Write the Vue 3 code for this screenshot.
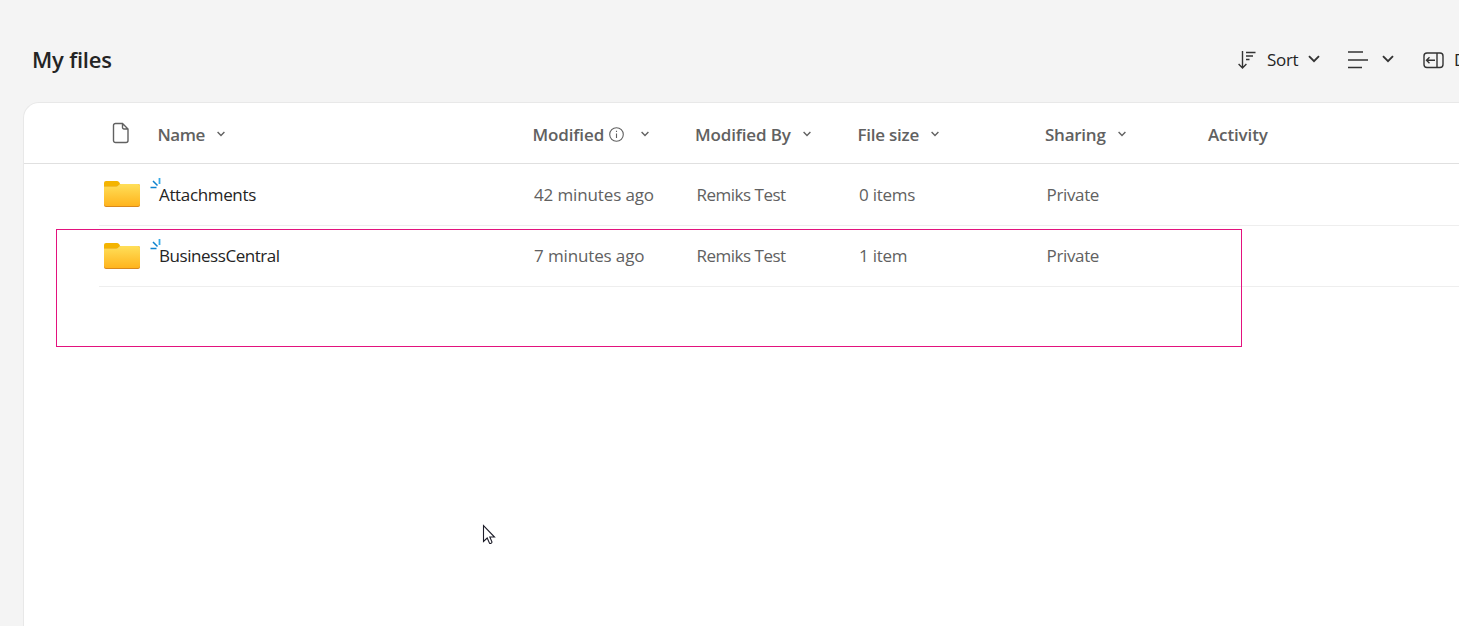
<script setup>
const columns = [
  { key: 'name', label: 'Name', menu: true },
  { key: 'modified', label: 'Modified', menu: true, info: true },
  { key: 'author', label: 'Modified By', menu: true },
  { key: 'size', label: 'File size', menu: true },
  { key: 'sharing', label: 'Sharing', menu: true },
  { key: 'activity', label: 'Activity', menu: false },
]
const files = [
  { name: 'Attachments', modified: '42 minutes ago', author: 'Remiks Test', size: '0 items', sharing: 'Private', cls: 'first' },
  { name: 'BusinessCentral', modified: '7 minutes ago', author: 'Remiks Test', size: '1 item', sharing: 'Private', cls: 'second' },
]
</script>

<template>
  <div class="page">
    <header class="toolbar">
      <h1>My files</h1>
      <div class="actions">
        <div class="action">
          <svg class="sort-icon" width="20" height="20" viewBox="0 0 20 20"><path d="M4.500 1v17M.6 13.900l3.900 4 3.900-4M8 2.500h9.500M8 6h7M8 9.500h3.500" /></svg>
          <span class="sort-label">Sort</span>
          <svg class="big-chevron" width="12" height="8" viewBox="0 0 12 8"><path d="M1 1.200l5 5 5-5" /></svg>
        </div>
        <div class="action view">
          <svg width="20" height="18" viewBox="0 0 20 18"><path d="M0 1h15M0 9h20M0 16.500h14" /></svg>
          <svg class="big-chevron" width="12" height="8" viewBox="0 0 12 8"><path d="M1 1.200l5 5 5-5" /></svg>
        </div>
        <div class="action details">
          <svg width="22" height="17" viewBox="0 0 22 17"><rect x="1" y="1" width="19" height="14.500" rx="3" /><path d="M14 1v14.500M3.500 8.200h8.500M6.500 5.200l-3 3 3 3" /></svg>
          <span>Details</span>
        </div>
      </div>
    </header>

    <main class="card">
      <div class="row head">
        <div class="type">
          <svg width="18" height="22" viewBox="0 0 18 22"><path d="M3.500 1.500h7l5.500 5.500v11.500a2 2 0 0 1-2 2H3.500a2 2 0 0 1-2-2V3.500a2 2 0 0 1 2-2zM10.500 1.500V5.500a1.500 1.500 0 0 0 1.500 1.500h4" /></svg>
        </div>
        <div v-for="c in columns" :key="c.key" class="cell" :class="c.key">
          <span class="label">{{ c.label }}</span>
          <svg v-if="c.info" class="info" width="15" height="15" viewBox="0 0 15 15"><circle cx="7.500" cy="7.500" r="6.800" /><path d="M7.500 6.500v4.500M7.500 3.800v1.300" /></svg>
          <svg v-if="c.menu" class="chevron" width="8" height="6" viewBox="0 0 8 6"><path d="M.6 1l3.400 3.400L7.400 1" /></svg>
        </div>
      </div>

      <div v-for="f in files" :key="f.name" class="row file" :class="f.cls">
        <div class="type">
          <svg width="36" height="28" viewBox="0 0 36 28">
            <defs>
              <linearGradient :id="'body-' + f.cls" x1="0" y1="0" x2="0" y2="1">
                <stop offset="0" stop-color="#ffdf59" /><stop offset="1" stop-color="#ffb41d" />
              </linearGradient>
            </defs>
            <path d="M0 3a2 2 0 0 1 2-2h11q1 0 2 1l1 1.500q0 2-2 4H0z" fill="#f4b400" />
            <path d="M0 6.500h12q1.500 0 2.500-1.200T17 4h17a2 2 0 0 1 2 2v19a2 2 0 0 1-2 2H2a2 2 0 0 1-2-2z" fill="#d9881c" />
            <path d="M0 6.500h12q1.500 0 2.500-1.200T17 4h17a2 2 0 0 1 2 2v18a2 2 0 0 1-2 2H2a2 2 0 0 1-2-2z" :fill="'url(#body-' + f.cls + ')'" />
          </svg>
        </div>
        <div class="cell name">
          <svg class="spark" width="12" height="11" viewBox="0 0 12 11"><path d="M.5 9.500h6M3 3l4.500 4.500" stroke="#0d82cf" /><path d="M9.500 0v6" stroke="#36a9e5" stroke-width="1.800" /></svg>
          <span class="label">{{ f.name }}</span>
        </div>
        <div class="cell modified"><span class="label">{{ f.modified }}</span></div>
        <div class="cell author"><span class="label">{{ f.author }}</span></div>
        <div class="cell size"><span class="label">{{ f.size }}</span></div>
        <div class="cell sharing"><span class="label">{{ f.sharing }}</span></div>
        <div class="cell"></div>
      </div>
    </main>

    <div class="highlight"></div>
    <svg class="pointer" width="14" height="21" viewBox="0 0 14 21"><path d="M1.500 1.500v16l3.700-3.500 2.300 5.200c1 .6 2.400 0 2.500-1.200L7.800 13h4.700z" fill="#fff" stroke="#1c1c28" stroke-width="1.100" /></svg>
  </div>
</template>

<style>
body { margin: 0; overflow: hidden; }
</style>

<style scoped>
.page {
  position: relative;
  width: 1459px;
  height: 626px;
  overflow: hidden;
  box-sizing: border-box;
  background: #f4f4f4;
  color: #242424;
  font: 17px/24px "Open Sans", "Noto Sans", sans-serif;
  white-space: nowrap;
}
svg { flex: none; fill: none; stroke-width: 1.4; }
.toolbar { display: flex; align-items: center; height: 102px; box-sizing: border-box; padding: 18px 0 0 32px; }
h1 { margin: 0; padding-bottom: 2px; width: 1206px; flex: none; font-size: 22px; line-height: 30px; font-weight: 600; letter-spacing: -0.2px; }
.actions { display: flex; align-items: center; stroke: #333; }
.action { display: flex; align-items: center; flex: none; width: 110px; }
.sort-label { margin: 0 9px 0 9px; width: 32px; letter-spacing: -0.3px; }
.big-chevron { stroke-width: 1.9; margin-bottom: 2px; }
.action span { stroke: none; }
.view { width: 75px; gap: 14px; }
.details { gap: 9px; }
.card {
  margin-left: 23px;
  height: 524px;
  box-sizing: border-box;
  border: 1px solid #e8e8e8;
  border-width: 1px 0 0 1px;
  border-radius: 16px 0 0 0;
  background: #fff;
}
.row { display: grid; align-items: center; box-sizing: border-box; color: #616161; }
.head {
  height: 61px;
  padding-left: 88px;
  grid-template-columns: 45.5px 375px 162.5px 162.5px 187.5px 163px 1fr;
  border-bottom: 1px solid #e0e0e0;
  font-weight: 600;
  stroke: #616161;
}
.head .type { padding-bottom: 1px; }
.cell { display: flex; align-items: center; padding-top: 3px; }
.type { display: flex; }
.chevron { margin: 0 0 1px 12px; }
.info { margin-left: 5px; stroke-width: 1.1; }
.info + .chevron { margin-left: 17px; }
.file {
  height: 61px;
  margin-left: 75px;
  padding-left: 5px;
  grid-template-columns: 46px 384px 162.5px 162.5px 187.5px 161px 1fr;
  border-bottom: 1px solid #eee;
}
.first { height: 62px; }
.first .type { padding-bottom: 2px; }
.file .cell { padding-top: 1px; }
.second .cell { padding: 0 0 1px; }
.file .name { color: #242424; }
.spark { margin: -23px -3px 0 0; stroke-width: 1.5; }
.head .label { stroke: none; letter-spacing: -0.25px; }
.head .name .label { letter-spacing: -0.5px; }
.head .author .label { letter-spacing: -0.15px; }
.head .modified .label, .head .activity .label { letter-spacing: -0.13px; }
.file .label { letter-spacing: -0.35px; }
.second .name .label { letter-spacing: -0.45px; }
.file .modified .label { letter-spacing: -0.13px; }
.file .author .label { letter-spacing: -0.5px; }
.file .size .label { letter-spacing: -0.25px; }
.highlight { position: absolute; left: 56px; top: 229px; width: 1186px; height: 118px; box-sizing: border-box; border: 1px solid #e3127e; }
.pointer { position: absolute; left: 482px; top: 524px; }
</style>
